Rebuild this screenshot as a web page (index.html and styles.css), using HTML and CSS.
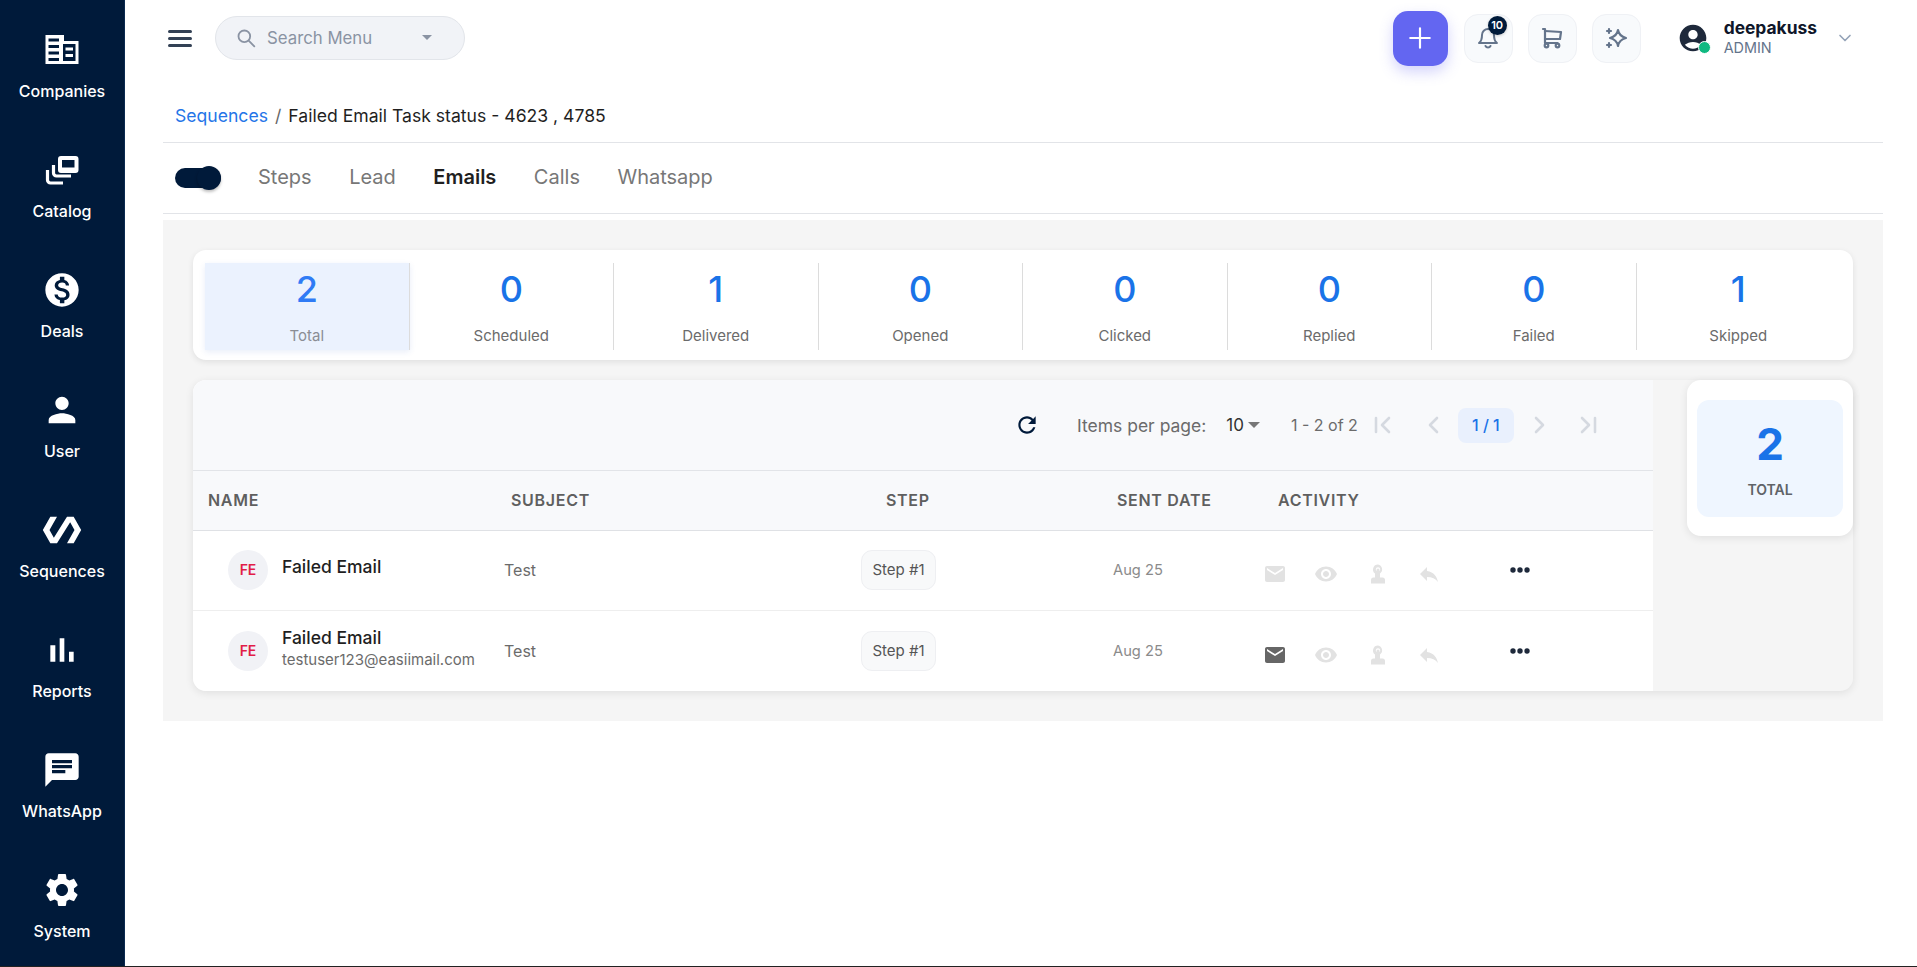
FILE: index.html
```html
<!DOCTYPE html>
<html lang="en">
<head>
    <meta charset="UTF-8">
    <meta name="viewport" content="width=device-width, initial-scale=1.0">
    <title>Failed Email Task status</title>
    <link rel="stylesheet" href="styles.css">
</head>
<body>
    <svg class="sprites" xmlns="http://www.w3.org/2000/svg">
        <symbol id="i-mail" viewBox="0 0 24 24"><path d="M20 4H4c-1.1 0-1.99.9-1.99 2L2 18c0 1.1.9 2 2 2h16c1.1 0 2-.9 2-2V6c0-1.1-.9-2-2-2zm0 4l-8 5-8-5V6l8 5 8-5v2z"/></symbol>
        <symbol id="i-eye" viewBox="0 0 24 24"><path d="M12 4.5C7 4.5 2.73 7.61 1 12c1.73 4.39 6 7.5 11 7.5s9.27-3.11 11-7.5c-1.73-4.39-6-7.5-11-7.5zM12 17c-2.76 0-5-2.24-5-5s2.24-5 5-5 5 2.24 5 5-2.24 5-5 5zm0-8c-1.66 0-3 1.34-3 3s1.34 3 3 3 3-1.34 3-3-1.34-3-3-3z"/></symbol>
        <symbol id="i-touch" viewBox="0 0 24 24"><path fill-rule="evenodd" d="M12 2.5a5 5 0 0 0-3 9V15.500H7.500A2.500 2.500 0 0 0 5 18v3.500h14V18a2.500 2.500 0 0 0-2.500-2.500H14v-4a5 5 0 0 0-2-9zM10.500 8a1.500 1.500 0 0 1 3 0v1.200a3 3 0 0 0 .7-1.700 2.200 2.200 0 0 0-4.400 0 3 3 0 0 0 .7 1.700z"/></symbol>
        <symbol id="i-reply" viewBox="0 0 24 24"><path d="M10 9V5l-7 7 7 7v-4.100c5 0 8.500 1.600 11 5.100-1-5-4-10-11-11z"/></symbol>
        <symbol id="i-more" viewBox="0 0 24 24"><circle cx="5" cy="12" r="2.700"/><circle cx="12" cy="12" r="2.700"/><circle cx="19" cy="12" r="2.700"/></symbol>
    </svg>

    <div class="app">
        <nav class="sidebar">
            <a class="nav-item">
                <svg class="nav-icon" viewBox="0 0 40 40"><path fill-rule="evenodd" d="M3.500 5H22V11H36.500V34H3.500ZM6.500 8.500V11.500H17V8.500ZM6.500 15V18H17V15ZM6.500 21.500V24.500H17V21.500ZM6.500 28V31H17V28ZM21 14V31H33.500V14ZM23.500 17.500V20.500H31V17.500ZM23.500 24V27H31V24Z"/></svg>
                <span>Companies</span>
            </a>
            <a class="nav-item">
                <svg class="nav-icon" viewBox="0 0 40 40"><path fill-rule="evenodd" d="M19 6H33.500a3 3 0 0 1 3 3V20a3 3 0 0 1-3 3H19a3 3 0 0 1-3-3V9a3 3 0 0 1 3-3ZM20 10V17.500H32.500V10Z"/><path fill="none" stroke="currentColor" stroke-width="3.200" d="M11.500 15V23a3 3 0 0 0 3 3H29M5.500 20V30a3 3 0 0 0 3 3H21"/></svg>
                <span>Catalog</span>
            </a>
            <a class="nav-item">
                <svg class="nav-icon" viewBox="0 0 24 24"><path d="M12 2C6.480 2 2 6.480 2 12s4.480 10 10 10 10-4.480 10-10S17.520 2 12 2zm1.410 16.090V20h-2.670v-1.930c-1.710-.36-3.160-1.460-3.270-3.400h1.960c.1 1.050.82 1.870 2.650 1.870 1.960 0 2.400-.98 2.400-1.590 0-.83-.44-1.610-2.670-2.140-2.480-.6-4.180-1.620-4.180-3.670 0-1.720 1.390-2.840 3.110-3.210V4h2.670v1.950c1.860.45 2.790 1.860 2.850 3.390H14.300c-.05-1.110-.64-1.870-2.220-1.870-1.500 0-2.400.68-2.400 1.640 0 .84.65 1.390 2.670 1.910s4.180 1.390 4.180 3.910c-.01 1.830-1.380 2.830-3.120 3.160z"/></svg>
                <span>Deals</span>
            </a>
            <a class="nav-item">
                <svg class="nav-icon" viewBox="0 0 24 24"><path d="M12 12c2.210 0 4-1.790 4-4s-1.790-4-4-4-4 1.790-4 4 1.790 4 4 4zm0 2c-2.670 0-8 1.340-8 4v2h16v-2c0-2.660-5.330-4-8-4z"/></svg>
                <span>User</span>
            </a>
            <a class="nav-item">
                <svg class="nav-icon" viewBox="0 0 24 24"><path d="M19 4h-4L7.110 16.630 4.500 12 9 4H5L.5 12 5 20h4l7.890-12.630L19.500 12 15 20h4l4.500-8z"/></svg>
                <span>Sequences</span>
            </a>
            <a class="nav-item">
                <svg class="nav-icon" viewBox="0 0 24 24"><path d="M5 9.200h3V19H5zM10.600 5h2.800v14h-2.800zm5.600 8H19v6h-2.800z"/></svg>
                <span>Reports</span>
            </a>
            <a class="nav-item">
                <svg class="nav-icon" viewBox="0 0 24 24"><path d="M20 2H4c-1.100 0-1.990.9-1.990 2L2 22l4-4h14c1.100 0 2-.9 2-2V4c0-1.100-.9-2-2-2zM6 9h12v2H6V9zm8 5H6v-2h8v2zm4-6H6V6h12v2z"/></svg>
                <span>WhatsApp</span>
            </a>
            <a class="nav-item">
                <svg class="nav-icon" viewBox="0 0 24 24"><path d="M19.140 12.940c.04-.3.06-.61.06-.94 0-.32-.02-.64-.07-.94l2.030-1.580c.18-.14.23-.41.12-.61l-1.920-3.320c-.12-.22-.37-.29-.59-.22l-2.390.96c-.5-.38-1.030-.7-1.620-.94L14.400 2.810c-.04-.24-.24-.41-.48-.41h-3.840c-.24 0-.43.17-.47.41L9.250 5.350c-.59.24-1.130.57-1.620.94l-2.390-.96c-.22-.08-.47 0-.59.22L2.740 8.870c-.12.21-.08.47.12.61l2.030 1.580c-.05.3-.09.63-.09.94s.02.64.07.94l-2.030 1.580c-.18.14-.23.41-.12.61l1.920 3.320c.12.22.37.29.59.22l2.390-.96c.5.38 1.030.7 1.620.94l.36 2.540c.05.24.24.41.48.41h3.840c.24 0 .44-.17.47-.41l.36-2.540c.59-.24 1.130-.56 1.620-.94l2.390.96c.22.08.47 0 .59-.22l1.920-3.320c.12-.22.07-.47-.12-.61l-2.010-1.580zM12 15.600c-1.980 0-3.600-1.620-3.600-3.600s1.620-3.600 3.600-3.600 3.600 1.620 3.600 3.600-1.620 3.600-3.600 3.600z"/></svg>
                <span>System</span>
            </a>
        </nav>

        <main class="main">
            <header class="topbar">
                <button class="menu-btn" aria-label="Menu"><span></span><span></span><span></span></button>
                <div class="search">
                    <svg class="search-icon" viewBox="0 0 24 24" fill="none" stroke="currentColor" stroke-width="2.200" stroke-linecap="round"><circle cx="10" cy="10" r="7"/><path d="M15.500 15.500L22 22"/></svg>
                    <span class="search-text">Search Menu</span>
                    <span class="caret search-caret"></span>
                </div>
                <div class="top-actions">
                    <button class="add-btn" aria-label="Add">
                        <svg viewBox="0 0 24 24" fill="none" stroke="currentColor" stroke-width="2" stroke-linecap="round"><path d="M12 3v18M3 12h18"/></svg>
                    </button>
                    <button class="tool-btn" aria-label="Notifications">
                        <svg viewBox="0 0 24 24" fill="none" stroke="currentColor" stroke-width="2" stroke-linecap="round" stroke-linejoin="round"><path d="M6 9a6 6 0 0 1 12 0c0 6 3 8 3 8H3s3-2 3-8"/><path d="M9.500 20a2.800 2.800 0 0 0 5 0"/></svg>
                        <span class="badge">10</span>
                    </button>
                    <button class="tool-btn" aria-label="Cart">
                        <svg viewBox="0 0 24 24" fill="none" stroke="currentColor" stroke-width="2.200" stroke-linecap="round" stroke-linejoin="round"><circle cx="6.500" cy="19.500" r="1.800"/><circle cx="17.500" cy="19.500" r="1.800"/><path d="M17.500 17H5V3H3"/><path d="M5 5l16 1-1 7H5"/></svg>
                    </button>
                    <button class="tool-btn" aria-label="Highlights">
                        <svg viewBox="0 0 24 24" fill="none" stroke="currentColor" stroke-width="2.200" stroke-linecap="round" stroke-linejoin="round"><path d="M14 4c.8 4.500 2.800 6.700 8 8-5.200 1.300-7.200 3.500-8 8-.8-4.500-2.800-6.700-8-8 5.200-1.300 7.200-3.500 8-8z"/><path d="M5 3v4M3 5h4M5 17v4M3 19h4"/></svg>
                    </button>
                    <div class="profile">
                        <div class="profile-pic">
                            <svg viewBox="0 0 24 24" fill="currentColor"><path d="M12 2C6.480 2 2 6.480 2 12s4.480 10 10 10 10-4.480 10-10S17.520 2 12 2zm0 4c1.930 0 3.500 1.570 3.500 3.500S13.930 13 12 13s-3.500-1.570-3.500-3.500S10.070 6 12 6zm0 14c-2.030 0-4.430-.82-6.140-2.880C7.550 15.800 9.680 15 12 15s4.450.8 6.140 2.120C16.430 19.180 14.030 20 12 20z"/></svg>
                            <span class="status-dot"></span>
                        </div>
                        <div class="profile-text">
                            <div class="profile-name">deepakuss</div>
                            <div class="profile-role">ADMIN</div>
                        </div>
                        <svg class="profile-chevron" viewBox="0 0 24 24" fill="none" stroke="currentColor" stroke-width="2" stroke-linecap="round" stroke-linejoin="round"><path d="M6 9l6 6 6-6"/></svg>
                    </div>
                </div>
            </header>

            <div class="breadcrumb">
                <a class="crumb-link">Sequences</a>
                <span class="crumb-sep">/</span>
                <span>Failed Email Task status - 4623 , 4785</span>
            </div>

            <div class="tabs">
                <div class="toggle"><span class="toggle-thumb"></span></div>
                <a class="tab">Steps</a>
                <a class="tab">Lead</a>
                <a class="tab active">Emails</a>
                <a class="tab">Calls</a>
                <a class="tab">Whatsapp</a>
            </div>

            <section class="panel">
                <div class="stats">
                    <div class="stat active"><div class="stat-num">2</div><div class="stat-label">Total</div></div>
                    <div class="stat"><div class="stat-num">0</div><div class="stat-label">Scheduled</div></div>
                    <div class="stat"><div class="stat-num">1</div><div class="stat-label">Delivered</div></div>
                    <div class="stat"><div class="stat-num">0</div><div class="stat-label">Opened</div></div>
                    <div class="stat"><div class="stat-num">0</div><div class="stat-label">Clicked</div></div>
                    <div class="stat"><div class="stat-num">0</div><div class="stat-label">Replied</div></div>
                    <div class="stat"><div class="stat-num">0</div><div class="stat-label">Failed</div></div>
                    <div class="stat"><div class="stat-num">1</div><div class="stat-label">Skipped</div></div>
                </div>

                <div class="lower">
                    <div class="table-wrap">
                        <div class="pager">
                            <svg class="refresh" viewBox="0 0 24 24" fill="currentColor"><path d="M17.650 6.350C16.200 4.900 14.210 4 12 4c-4.420 0-7.990 3.580-7.990 8s3.570 8 7.990 8c3.730 0 6.840-2.550 7.730-6h-2.080c-.82 2.330-3.040 4-5.650 4-3.310 0-6-2.690-6-6s2.690-6 6-6c1.660 0 3.140.69 4.220 1.780L13 11h7V4l-2.350 2.350z"/></svg>
                            <span class="per-page">Items per page:</span>
                            <span class="per-value">10</span>
                            <span class="caret per-caret"></span>
                            <span class="range">1 - 2 of 2</span>
                            <svg class="page-icon first" viewBox="0 0 24 24" fill="none" stroke="currentColor" stroke-width="2.600" stroke-linecap="round" stroke-linejoin="round"><path d="M5 5v14M18 5l-7 7 7 7"/></svg>
                            <svg class="page-icon prev" viewBox="0 0 24 24" fill="none" stroke="currentColor" stroke-width="2.600" stroke-linecap="round" stroke-linejoin="round"><path d="M15 5l-7 7 7 7"/></svg>
                            <span class="page-current">1 / 1</span>
                            <svg class="page-icon next" viewBox="0 0 24 24" fill="none" stroke="currentColor" stroke-width="2.600" stroke-linecap="round" stroke-linejoin="round"><path d="M9 5l7 7-7 7"/></svg>
                            <svg class="page-icon last" viewBox="0 0 24 24" fill="none" stroke="currentColor" stroke-width="2.600" stroke-linecap="round" stroke-linejoin="round"><path d="M19 5v14M6 5l7 7-7 7"/></svg>
                        </div>

                        <div class="row head">
                            <div class="th-name">NAME</div>
                            <div class="th-subject">SUBJECT</div>
                            <div class="th-step">STEP</div>
                            <div class="th-date">SENT DATE</div>
                            <div class="th-activity">ACTIVITY</div>
                            <div></div>
                        </div>

                        <div class="row item first-row">
                            <div class="contact-cell">
                                <span class="avatar">FE</span>
                                <div class="contact">
                                    <div class="contact-name">Failed Email</div>
                                </div>
                            </div>
                            <div class="subject">Test</div>
                            <div><span class="chip">Step #1</span></div>
                            <div class="date">Aug 25</div>
                            <div class="activity">
                                <svg><use href="#i-mail"/></svg>
                                <svg><use href="#i-eye"/></svg>
                                <svg><use href="#i-touch"/></svg>
                                <svg><use href="#i-reply"/></svg>
                            </div>
                            <div class="more"><svg><use href="#i-more"/></svg></div>
                        </div>

                        <div class="row item last-row">
                            <div class="contact-cell">
                                <span class="avatar">FE</span>
                                <div class="contact">
                                    <div class="contact-name">Failed Email</div>
                                    <div class="contact-email">testuser123@easiimail.com</div>
                                </div>
                            </div>
                            <div class="subject">Test</div>
                            <div><span class="chip">Step #1</span></div>
                            <div class="date">Aug 25</div>
                            <div class="activity">
                                <svg class="sent"><use href="#i-mail"/></svg>
                                <svg><use href="#i-eye"/></svg>
                                <svg><use href="#i-touch"/></svg>
                                <svg><use href="#i-reply"/></svg>
                            </div>
                            <div class="more"><svg><use href="#i-more"/></svg></div>
                        </div>
                    </div>

                    <aside class="side">
                        <div class="side-card">
                            <div class="side-inner">
                                <div class="side-num">2</div>
                                <div class="side-label">TOTAL</div>
                            </div>
                        </div>
                    </aside>
                </div>
            </section>
        </main>
    </div>
</body>
</html>
```

FILE: styles.css
```css
:root {
    --navy: #001a3a;
    --blue: #1a73e8;
    --line: #e2e4e8;
    --head-bg: #f8f9fb;
    --muted: #6b6b6b;
    --faded: #e2e2e2;
}

* {
    margin: 0;
    padding: 0;
    box-sizing: border-box;
}

body {
    font-family: "Inter", "Liberation Sans", sans-serif;
    background: #fff;
    color: #1f1f1f;
    height: 967px;
    overflow: hidden;
}

button {
    border: none;
    background: none;
    font: inherit;
}

.sprites {
    display: none;
}

.app {
    display: flex;
    height: 967px;
    border-bottom: 1px solid #222;
}

/* sidebar */
.sidebar {
    width: 125px;
    flex-shrink: 0;
    background: var(--navy);
    border-right: 1px solid #0b2a50;
    color: #fff;
}

.nav-item {
    height: 120px;
    padding-top: 30px;
    display: flex;
    flex-direction: column;
    align-items: center;
    font-size: 16px;
    font-weight: 500;
}

.nav-icon {
    width: 40px;
    height: 40px;
    fill: currentColor;
    margin-bottom: 10px;
}

.nav-item span {
    line-height: 22px;
}

/* top bar */
.main {
    flex: 1;
    min-width: 0;
    padding: 0 34px 0 38px;
}

.topbar {
    height: 76px;
    display: flex;
    align-items: center;
    margin: 0 -34px 0 -38px;
    padding: 0 62px 0 43px;
}

.menu-btn {
    width: 24px;
    display: flex;
    flex-direction: column;
    gap: 4px;
    margin-right: 23px;
}

.menu-btn span {
    height: 3px;
    border-radius: 2px;
    background: #334155;
}

.search {
    width: 250px;
    height: 44px;
    margin-top: -1px;
    border-radius: 22px;
    border: 1px solid #e2e5ea;
    background: #f1f3f7;
    display: flex;
    align-items: center;
    padding: 0 32px 0 20px;
    color: #8a93a3;
}

.search-icon {
    width: 20px;
    height: 20px;
    margin-right: 11px;
}

.search-text {
    font-size: 16.800px;
}

.caret {
    width: 0;
    height: 0;
    border-left: 6px solid transparent;
    border-right: 6px solid transparent;
    border-top: 6px solid #777;
}

.search-caret {
    margin-left: auto;
    border-left-width: 5px;
    border-right-width: 5px;
    border-top-width: 5px;
    border-top-color: #8a93a3;
}

.top-actions {
    margin-left: auto;
    display: flex;
    align-items: center;
}

.add-btn {
    width: 55px;
    height: 55px;
    border-radius: 15px;
    background: #6366f1;
    color: #fff;
    display: flex;
    align-items: center;
    justify-content: center;
    box-shadow: 0 6px 14px rgba(99, 102, 241, 0.28);
    margin-right: 16px;
}

.add-btn svg {
    width: 26px;
    height: 26px;
}

.tool-btn {
    position: relative;
    width: 49px;
    height: 49px;
    border-radius: 14px;
    border: 1px solid #eff1f5;
    background: #f8fafc;
    color: #64748b;
    display: flex;
    align-items: center;
    justify-content: center;
    margin-right: 15px;
}

.tool-btn svg {
    width: 24px;
    height: 24px;
}

.badge {
    position: absolute;
    top: 1px;
    right: 5px;
    width: 19px;
    height: 19px;
    border-radius: 50%;
    background: var(--navy);
    color: #fff;
    font-size: 11px;
    font-weight: 600;
    line-height: 19px;
    text-align: center;
    box-shadow: 0 1px 3px rgba(0, 0, 0, 0.2);
}

.profile {
    display: flex;
    align-items: center;
    margin-left: 21px;
}

.profile-pic {
    position: relative;
    width: 32px;
    height: 32px;
    color: #1e293b;
    margin-right: 15px;
}

.profile-pic svg {
    width: 32px;
    height: 32px;
    display: block;
}

.status-dot {
    position: absolute;
    right: -2px;
    bottom: 0;
    width: 13px;
    height: 13px;
    border-radius: 50%;
    background: #10b981;
    border: 1px solid #fff;
}

.profile-text {
    margin-top: -2px;
}

.profile-name {
    font-size: 17.400px;
    font-weight: 700;
    line-height: 21px;
    color: #0f172a;
}

.profile-role {
    font-size: 14.400px;
    line-height: 20px;
    color: #64748b;
}

.profile-chevron {
    width: 20px;
    height: 20px;
    color: #94a3b8;
    margin-left: 18px;
}

/* breadcrumb and tabs */
.breadcrumb {
    padding: 29px 0 15px 12px;
    font-size: 17.600px;
    line-height: 22px;
    display: flex;
    gap: 7px;
}

.crumb-link {
    color: #2475e8;
}

.crumb-sep {
    color: #666;
}

.tabs {
    height: 72px;
    border-top: 1px solid var(--line);
    border-bottom: 1px solid var(--line);
    display: flex;
    align-items: center;
    padding-left: 12px;
    margin-bottom: 6px;
}

.toggle {
    position: relative;
    width: 46px;
    height: 20px;
    border-radius: 10px;
    background: var(--navy);
    margin-right: 37px;
}

.toggle-thumb {
    position: absolute;
    right: 0;
    top: -2px;
    width: 24px;
    height: 24px;
    border-radius: 50%;
    background: var(--navy);
    box-shadow: 0 2px 3px rgba(0, 0, 0, 0.25);
}

.tab {
    font-size: 20px;
    color: #777;
    margin-right: 37.500px;
    margin-top: -2px;
}

.tab.active {
    color: #1f1f1f;
    font-weight: 600;
}

/* grey panel */
.panel {
    background: #f5f5f5;
    padding: 30px;
}

.stats {
    height: 110px;
    display: flex;
    padding: 13px 13px 10px 12px;
    background: #fff;
    border-radius: 13px;
    box-shadow: 0 2px 6px rgba(0, 0, 0, 0.09);
}

.stat {
    flex: 1;
    text-align: center;
    padding-top: 4px;
    border-right: 1px solid #dcdcdc;
}

.stat:last-child {
    border-right: none;
}

.stat.active {
    background: #ebf2fe;
    box-shadow: 0 2px 6px rgba(40, 90, 200, 0.1);
}

.stat-num {
    font-size: 36px;
    font-weight: 500;
    line-height: 44px;
    color: var(--blue);
}

.stat.active .stat-num {
    color: #2f7bf5;
}

.stat-label {
    margin-top: 15px;
    font-size: 15px;
    line-height: 20px;
    color: var(--muted);
}

.stat.active .stat-label {
    color: #8a8d94;
}

.lower {
    display: flex;
    margin-top: 20px;
    height: 311px;
    border-radius: 13px;
    box-shadow: 0 2px 8px rgba(0, 0, 0, 0.09);
}

.table-wrap {
    width: 1460px;
    background: #fff;
    border-radius: 13px 0 0 13px;
    overflow: hidden;
}

.pager {
    height: 91px;
    display: flex;
    align-items: center;
    background: var(--head-bg);
    border-bottom: 1px solid var(--line);
    padding-left: 821px;
    font-size: 16px;
    color: var(--muted);
}

.refresh {
    width: 26px;
    height: 26px;
    color: var(--navy);
    margin-right: 37px;
}

.per-page {
    font-size: 17.500px;
}

.per-value {
    font-size: 17px;
    color: #333;
    margin-left: 20px;
    margin-right: 4px;
}

.per-caret {
    border-left-width: 6.500px;
    border-right-width: 6.500px;
    margin-right: 31px;
}

.page-icon {
    width: 24px;
    height: 24px;
    color: #d5d9e0;
}

.page-icon.first {
    margin-left: 13px;
    margin-right: 27px;
}

.page-icon.prev {
    margin-right: 12px;
}

.page-icon.next {
    margin-left: 13px;
    margin-right: 25px;
}

.page-current {
    width: 56px;
    height: 35px;
    border-radius: 8px;
    background: #e9f0fd;
    color: var(--blue);
    font-weight: 500;
    line-height: 35px;
    text-align: center;
}

.row {
    display: grid;
    grid-template-columns: 311px 357px 251px 151px 227px 163px;
    align-items: center;
}

.head {
    height: 60px;
    padding-bottom: 1px;
    background: var(--head-bg);
    border-bottom: 1px solid #dfe1e5;
    font-size: 16px;
    font-weight: 600;
    letter-spacing: 0.7px;
    color: #5f5f5f;
}

.th-name { padding-left: 15px; }
.th-subject { padding-left: 7px; }
.th-step { padding-left: 25px; }
.th-date { padding-left: 5px; }
.th-activity { padding-left: 15px; }

.item {
    height: 80px;
    border-bottom: 1px solid #eee;
}

.first-row {
    padding-bottom: 1px;
}

.last-row {
    border-bottom: none;
}

.contact-cell {
    display: flex;
    align-items: center;
    padding-left: 35px;
    gap: 14px;
}

.avatar {
    width: 40px;
    height: 40px;
    flex-shrink: 0;
    border-radius: 50%;
    background: #f1f2f6;
    color: #e11d48;
    font-size: 14px;
    font-weight: 600;
    line-height: 40px;
    text-align: center;
}

.contact {
    padding-bottom: 6px;
}

.contact-name {
    font-size: 17.500px;
    font-weight: 500;
    line-height: 20px;
}

.contact-email {
    margin-top: 3px;
    font-size: 15px;
    line-height: 18px;
    color: var(--muted);
}

.subject {
    font-size: 16px;
    color: var(--muted);
}

.chip {
    display: inline-block;
    width: 75px;
    height: 40px;
    border-radius: 11px;
    border: 1px solid #eeeff2;
    background: #f8f9fa;
    font-size: 15px;
    line-height: 38px;
    text-align: center;
    color: #555;
}

.date {
    padding-left: 1px;
    font-size: 14.700px;
    color: #8b8b8b;
}

.activity {
    display: flex;
    gap: 27.300px;
    margin-top: 7px;
}

.activity svg {
    width: 24px;
    height: 24px;
    fill: var(--faded);
}

.activity svg.sent {
    fill: #666;
}

.more {
    padding-left: 18px;
}

.more svg {
    display: block;
    width: 24px;
    height: 24px;
    fill: #1e293b;
}

/* total card on the right */
.side {
    flex: 1;
    display: flex;
    justify-content: flex-end;
    align-items: flex-start;
}

.side-card {
    width: 166px;
    height: 156px;
    padding: 20px 10px 19px;
    background: #fff;
    border-radius: 14px;
    box-shadow: 0 2px 8px rgba(0, 0, 0, 0.09);
}

.side-inner {
    height: 100%;
    border-radius: 12px;
    background: #eff6ff;
    text-align: center;
    padding-top: 16px;
}

.side-num {
    font-size: 44px;
    font-weight: 700;
    line-height: 56px;
    color: var(--blue);
}

.side-label {
    margin-top: 8px;
    font-size: 14px;
    font-weight: 600;
    line-height: 20px;
    color: #5f6368;
}
```
